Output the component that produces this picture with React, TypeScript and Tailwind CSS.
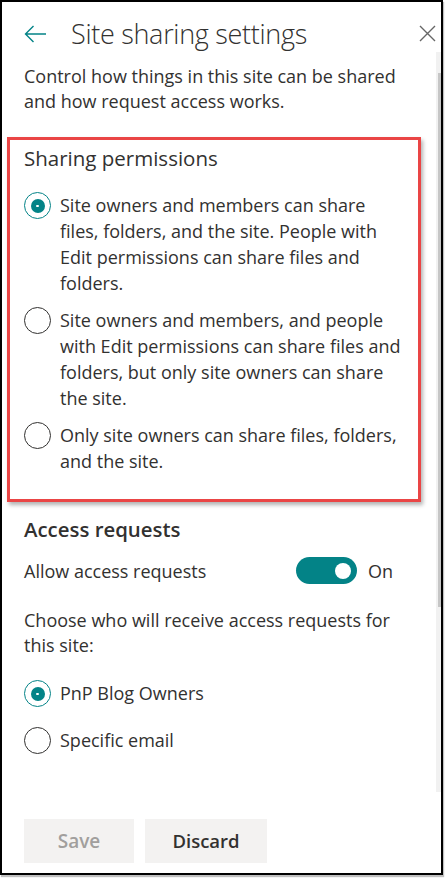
import React from 'react'

const teal = '#038387'

function Radio({ checked }: { checked?: boolean }) {
  return checked ? (
    <span className="relative flex h-[27px] w-[27px] shrink-0 items-center justify-center rounded-full border-[1.5px] border-[#038387] bg-white">
      <span className="flex h-[14px] w-[14px] items-center justify-center rounded-full bg-[#038387]">
        <span className="h-[2px] w-[3px] rounded-full bg-white" />
      </span>
    </span>
  ) : (
    <span className="h-[27px] w-[27px] shrink-0 rounded-full border-[1.5px] border-[#323130] bg-white" />
  )
}

function Option({ checked, children }: { checked?: boolean; children: React.ReactNode }) {
  return (
    <div className="flex items-start gap-[9px]">
      <Radio checked={checked} />
      <span className="text-[18px] leading-[26px] text-[#323130]">{children}</span>
    </div>
  )
}

export default function App() {
  return (
    <div className="h-[878px] w-[446px] bg-white" style={{ fontFamily: '"Open Sans", "Noto Sans", sans-serif' }}>
      <div className="relative h-[875px] w-[443px] overflow-hidden border-2 border-black bg-white shadow-[1px_2px_1px_rgba(0,0,0,0.25)]">
        {/* scrollbar */}
        <div className="absolute right-0 top-[50px] h-[740px] w-[5px] bg-[#f1f1f1]">
          <div className="ml-auto mt-[21px] h-[534px] w-[3px] bg-[#c6c6c6]" />
        </div>

        <div className="flex items-center pl-[22px] pr-[5px] pt-[14px]">
          <svg width="23" height="18" viewBox="0 0 23 18" fill="none" stroke={teal} strokeWidth="1.4">
            <path d="M22 9H1.5M9.5 1L1.5 9l8 8" />
          </svg>
          <h1 className="ml-[24px] flex-1 text-[27px] font-light leading-[36px] tracking-[-0.3px] text-[#323130]">
            Site sharing settings
          </h1>
          <svg width="17" height="17" viewBox="0 0 17 17" stroke="#666666" strokeWidth="1.4" className="mt-[-2px]">
            <path d="M1 1l15 15M16 1L1 16" />
          </svg>
        </div>

        <p className="ml-[22px] mt-[12px] w-[394px] text-[18px] leading-[25px] text-[#323130]">
          Control how things in this site can be shared and how request access works.
        </p>

        <div className="ml-[5px] mt-[23px] w-[414px] border-[3px] border-[#ea4545] pb-[25px] pl-[14px] pr-[15px] pt-[4px] shadow-[2px_3px_4px_rgba(0,0,0,0.3)]">
          <h2 className="text-[20.5px] leading-[28px] text-[#323130]">Sharing permissions</h2>
          <div className="mt-[20px] flex flex-col gap-[11px]">
            <Option checked>
              Site owners and members can share files, folders, and the site. People with Edit permissions can share files and folders.
            </Option>
            <Option>
              Site owners and members, and people with Edit permissions can share files and folders, but only site owners can share the site.
            </Option>
            <Option>Only site owners can share files, folders, and the site.</Option>
          </div>
        </div>

        <div className="ml-[22px] mt-[13px] w-[394px]">
          <h2 className="text-[20.4px] font-semibold leading-[28px] text-[#323130]">Access requests</h2>
          <div className="mt-[14px] flex items-center">
            <span className="w-[272px] text-[18px] leading-[26px] text-[#323130]">Allow access requests</span>
            <span className="flex h-[27px] w-[61px] items-center justify-end rounded-full bg-[#038387] pr-[6px]">
              <span className="h-[16px] w-[16px] rounded-full bg-white" />
            </span>
            <span className="ml-[11px] text-[18px] leading-[26px] text-[#323130]">On</span>
          </div>
          <p className="mt-[24px] text-[18px] leading-[25px] text-[#323130]">
            Choose who will receive access requests for this site:
          </p>
          <div className="mt-[22px] flex flex-col gap-[20px]">
            <Option checked>PnP Blog Owners</Option>
            <Option>Specific email</Option>
          </div>
        </div>

        <div className="ml-[22px] mt-[65px] flex gap-[11px]">
          <button className="h-[44px] w-[110px] bg-[#f3f2f1] text-[19px] font-semibold text-[#a19f9d]">Save</button>
          <button className="h-[44px] w-[122px] bg-[#f3f2f1] text-[18.5px] font-semibold text-[#323130]">Discard</button>
        </div>
      </div>
    </div>
  )
}
